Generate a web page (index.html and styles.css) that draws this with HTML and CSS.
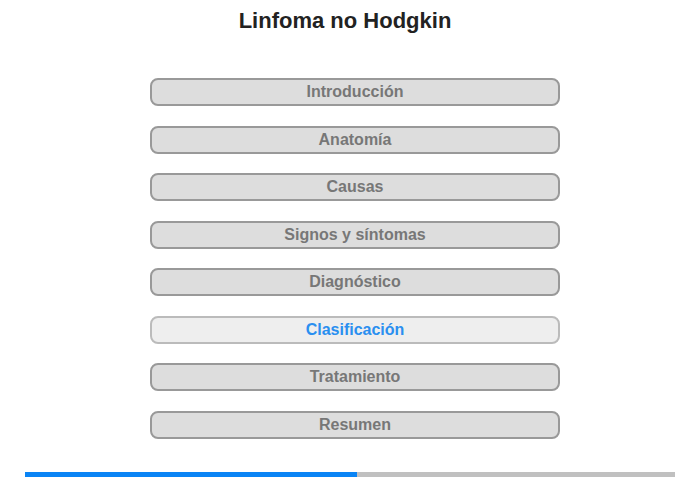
FILE: index.html
```html
<!DOCTYPE html>
<html lang="es">
<head>
<meta charset="utf-8">
<title>Linfoma no Hodgkin</title>
<link rel="stylesheet" href="styles.css">
</head>
<body>
<div class="page">
    <h1>Linfoma no Hodgkin</h1>

    <div class="menu">
        <div class="item">Introducción</div>
        <div class="item">Anatomía</div>
        <div class="item">Causas</div>
        <div class="item">Signos y síntomas</div>
        <div class="item">Diagnóstico</div>
        <div class="item active">Clasificación</div>
        <div class="item">Tratamiento</div>
        <div class="item">Resumen</div>
    </div>

    <div class="progress">
        <div class="done" style="width: 51.1%"></div>
    </div>
</div>
</body>
</html>
```

FILE: styles.css
```css
body {
    margin: 0;
    font-family: "Liberation Sans", Arial, sans-serif;
    background: #fff;
}

.page {
    width: 700px;
    height: 480px;
}

h1 {
    width: 690px;
    margin: 0;
    padding-top: 8px;
    font-size: 22px;
    line-height: 26px;
    text-align: center;
    color: #222;
}

.menu {
    display: flex;
    flex-direction: column;
    align-items: center;
    gap: 19.5px;
    margin: 44px 0 0 10px;
}

.item {
    box-sizing: border-box;
    width: 410px;
    height: 28px;
    line-height: 24px;
    border: 2px solid #999;
    border-radius: 8px;
    background-color: #ddd;
    color: #777;
    font-size: 16px;
    font-weight: bold;
    text-align: center;
}

.item.active {
    background-color: #eee;
    border-color: #bbb;
    color: #2a8ff0;
}

.progress {
    margin: 33px 25px 0;
    height: 5px;
    background-color: #c0c0c0;
}

.done {
    height: 100%;
    background-color: #0a84f5;
}
```
